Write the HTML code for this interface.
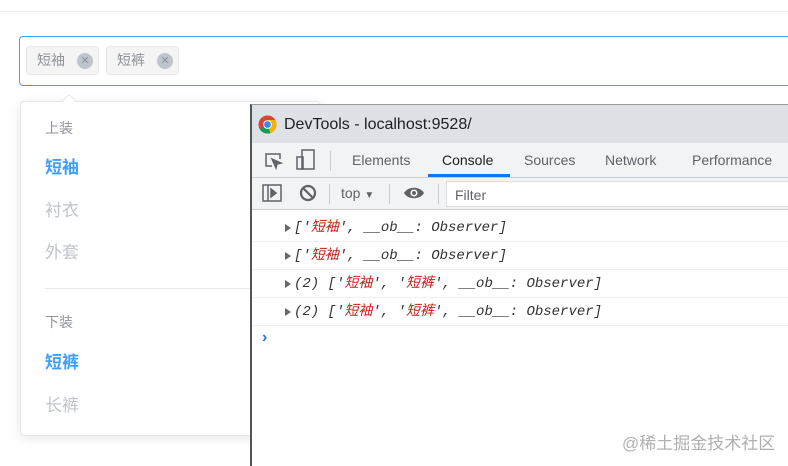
<!DOCTYPE html>
<html><head><meta charset="utf-8"><style>
*{box-sizing:border-box;margin:0;padding:0}
body{width:788px;height:464px;overflow:hidden;background:#fff;font-family:"Liberation Sans","Noto Sans CJK SC",sans-serif;position:relative}
.hdr{position:absolute;left:0;top:0;width:788px;height:12px;border-bottom:1px solid #eee}
.inp{position:absolute;left:19px;top:36px;width:790px;height:50px;border:1px solid #409eff;border-radius:4px}
.tag{position:absolute;top:46px;height:29px;background:#f4f4f5;border:1px solid #e9e9eb;border-radius:4px;font-size:14px;color:#909399;line-height:27px;padding-left:10px}
.tag i{position:absolute;top:6px;right:5px;width:16px;height:16px;border-radius:50%;background:#c0c4cc;color:#909399;font-style:normal;font-size:11px;line-height:16px;text-align:center}
.dd{position:absolute;left:20px;top:101px;width:300px;height:335px;background:#fff;border:1px solid #e4e7ed;border-radius:4px;box-shadow:0 2px 12px rgba(0,0,0,.1)}
.arr{position:absolute;left:64px;top:96px;width:10px;height:10px;background:#fff;border-left:1px solid #e4e7ed;border-top:1px solid #e4e7ed;transform:rotate(45deg)}
.it{position:absolute;left:45px;font-size:17px}
.grp{font-size:14px;color:#909399}
.dt{position:absolute;left:250px;top:104px;width:540px;height:362px;background:#fff;border-left:2px solid #555;border-top:1px solid #999}
.tb{height:38px;background:#dee1e6;font-size:16px;color:#202124;line-height:40px;padding-left:32px;position:relative}
.tabs{height:35px;background:#f1f3f4;border-bottom:1px solid #cacdd1;position:relative;font-size:14px;color:#5f6368}
.tabs span{position:absolute;top:9px}
.tool{height:32px;background:#f1f3f4;border-bottom:1px solid #cacdd1;position:relative;font-size:14px;color:#5f6368}
.row{height:28px;border-bottom:1px solid #f0f0f0;font-family:"Liberation Mono","Noto Sans CJK SC",monospace;font-style:italic;font-size:14px;color:#333;line-height:28px;padding-left:32px;position:relative}
.row:before{content:"";position:absolute;left:33px;top:10px;border-left:6px solid #666;border-top:4px solid transparent;border-bottom:4px solid transparent}
.row span.p{padding-left:10px}
.s{color:#c41a16}
</style></head><body>
<div class="hdr"></div>
<div class="inp"></div>
<div class="tag" style="left:26px;width:73px">短袖<i>✕</i></div>
<div class="tag" style="left:106px;width:73px">短裤<i>✕</i></div>
<div class="dd"></div><div class="arr"></div>
<div class="it grp" style="top:118px">上装</div>
<div class="it" style="top:153px;color:#409eff;font-weight:bold">短袖</div>
<div class="it" style="top:196px;color:#c0c4cc">衬衣</div>
<div class="it" style="top:238px;color:#c0c4cc">外套</div>
<div style="position:absolute;left:45px;top:288px;width:220px;height:1px;background:#e4e7ed"></div>
<div class="it grp" style="top:312px">下装</div>
<div class="it" style="top:348px;color:#409eff;font-weight:bold">短裤</div>
<div class="it" style="top:391px;color:#c0c4cc">长裤</div>
<div class="dt">
 <div class="tb"><svg style="position:absolute;left:6px;top:10px" width="19" height="19" viewBox="0 0 20 20"><circle cx="10" cy="10" r="9.5" fill="#db4437"/><path d="M10 10 L1.8 14.7 A9.5 9.5 0 0 0 13 19 Z" fill="#0f9d58"/><path d="M10 10 L13 19 A9.5 9.5 0 0 0 18.2 5.3 L10 5.3Z" fill="#f4b400"/><circle cx="10" cy="10" r="4.6" fill="#fff"/><circle cx="10" cy="10" r="3.6" fill="#4285f4"/></svg>DevTools - localhost:9528/</div>
 <div class="tabs">
  <svg style="position:absolute;left:12px;top:8px" width="20" height="20" viewBox="0 0 20 20" fill="none" stroke="#5f6368" stroke-width="1.5"><path d="M8 15H2V3h14v5"/><path d="M8 8l9 4-4 1-1 4z" fill="#5f6368"/></svg>
  <svg style="position:absolute;left:44px;top:6px" width="20" height="22" viewBox="0 0 20 22" fill="none" stroke="#5f6368" stroke-width="1.5"><rect x="6" y="1" width="12" height="19"/><rect x="1" y="8" width="6" height="12"/></svg>
  <div style="position:absolute;left:78px;top:8px;width:1px;height:20px;background:#ccc"></div>
  <span style="left:100px">Elements</span><span style="left:190px;color:#202124">Console</span>
  <div style="position:absolute;left:176px;top:31px;width:82px;height:3px;background:#1a73e8"></div>
  <span style="left:272px">Sources</span><span style="left:353px">Network</span><span style="left:440px">Performance</span>
 </div>
 <div class="tool">
  <svg style="position:absolute;left:10px;top:6px" width="20" height="18" viewBox="0 0 20 18" fill="none" stroke="#5f6368" stroke-width="1.5"><rect x="1" y="1" width="18" height="16"/><path d="M6 1v16"/><path d="M9 5l5 4-5 4z" fill="#5f6368"/></svg>
  <svg style="position:absolute;left:47px;top:6px" width="18" height="18" viewBox="0 0 18 18" fill="none" stroke="#5f6368" stroke-width="2.2"><circle cx="9" cy="9" r="7"/><path d="M4 4l10 10"/></svg>
  <div style="position:absolute;left:77px;top:6px;width:1px;height:20px;background:#ccc"></div>
  <span style="position:absolute;left:89px;top:7px">top <span style="font-size:10px">▼</span></span>
  <div style="position:absolute;left:137px;top:6px;width:1px;height:20px;background:#ccc"></div>
  <svg style="position:absolute;left:151px;top:8px" width="22" height="14" viewBox="0 0 22 14"><path d="M1 7C5 0 17 0 21 7C17 14 5 14 1 7z" fill="#5f6368"/><circle cx="11" cy="7" r="3.5" fill="#fff"/><circle cx="11" cy="7" r="2" fill="#5f6368"/></svg>
  <div style="position:absolute;left:186px;top:6px;width:1px;height:20px;background:#ccc"></div>
  <div style="position:absolute;left:194px;top:3px;width:360px;height:26px;background:#fff;border:1px solid #ddd;padding:5px 8px;color:#5f6368">Filter</div>
 </div>
 <div style="height:4px"></div>
 <div class="row"><span class="p">['<span class="s">短袖</span>', __ob__: Observer]</span></div>
 <div class="row"><span class="p">['<span class="s">短袖</span>', __ob__: Observer]</span></div>
 <div class="row"><span class="p">(2) ['<span class="s">短袖</span>', '<span class="s">短裤</span>', __ob__: Observer]</span></div>
 <div class="row"><span class="p">(2) ['<span class="s">短袖</span>', '<span class="s">短裤</span>', __ob__: Observer]</span></div>
 <div style="color:#1a73e8;font-weight:bold;padding-left:10px;font-size:16px;line-height:24px">›</div>
</div>
<div style="position:absolute;left:622px;top:429px;font-size:17px;color:#b0b0b0">@稀土掘金技术社区</div>
</body></html>
